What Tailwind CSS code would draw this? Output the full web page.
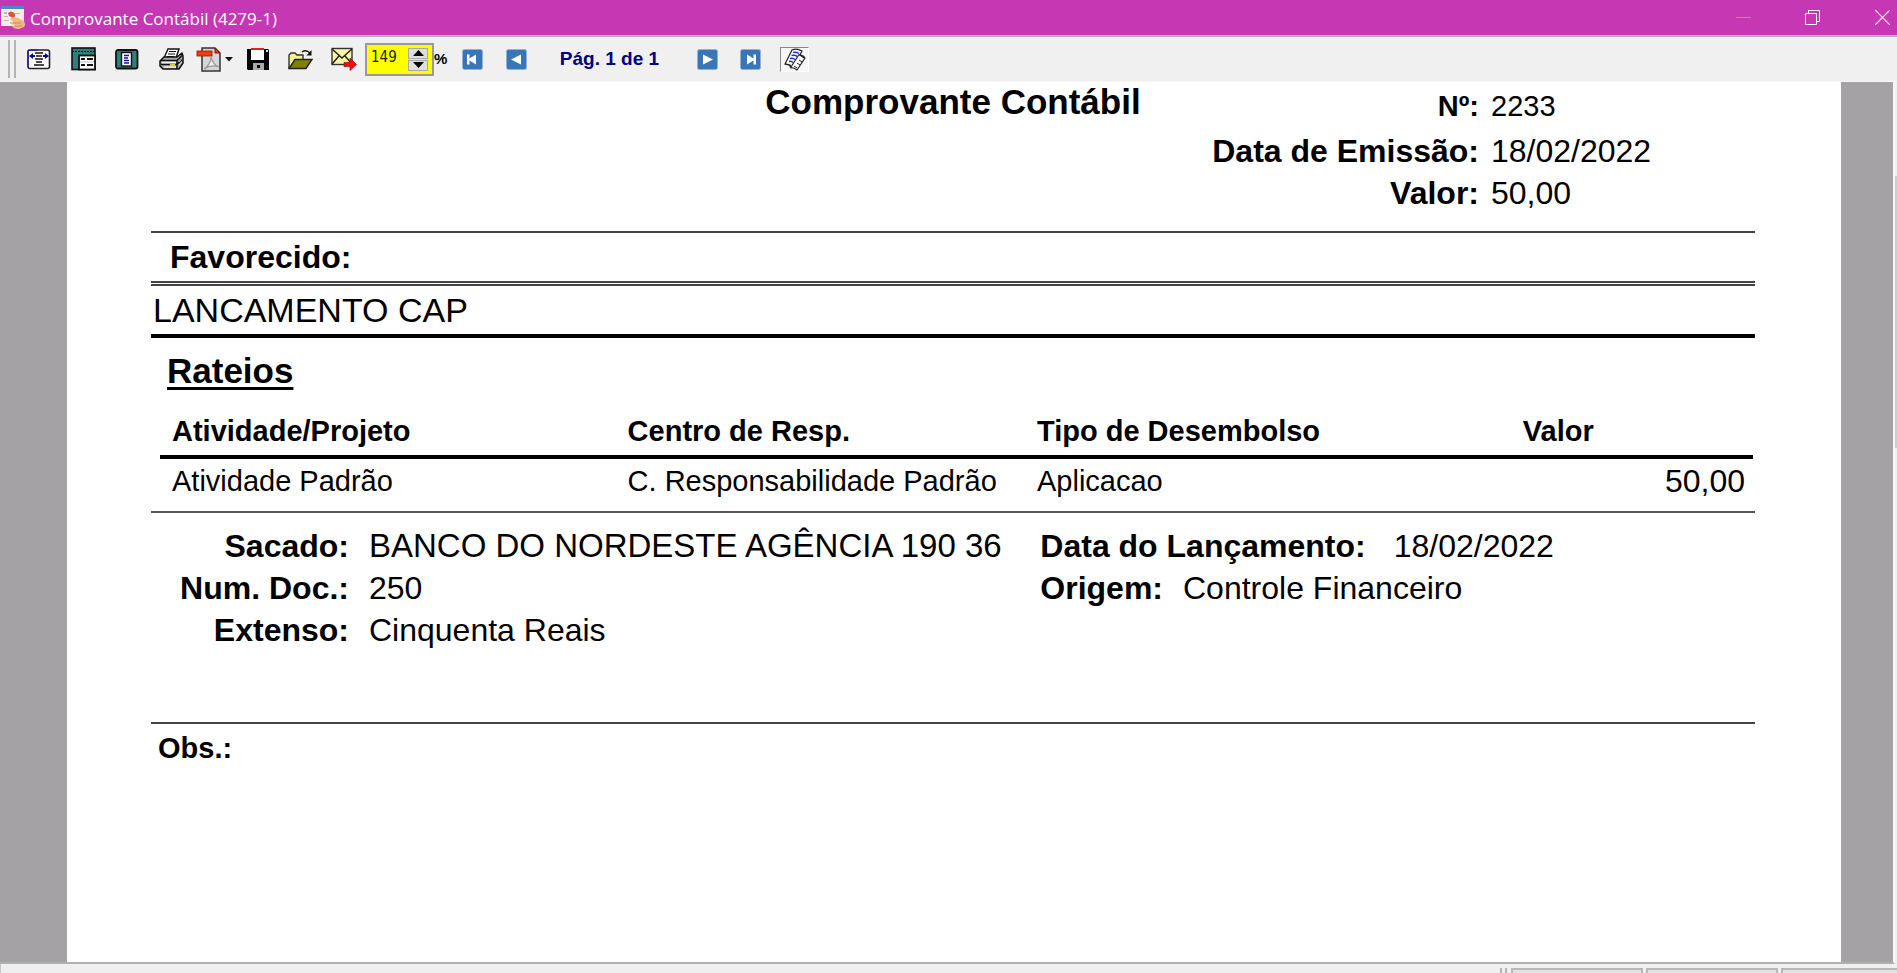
<!DOCTYPE html>
<html lang="pt-BR">
<head>
<meta charset="utf-8">
<title>Comprovante Contábil (4279-1)</title>
<script src="https://cdn.jsdelivr.net/npm/@tailwindcss/browser@4"></script>
</head>
<body class="flex h-screen flex-col overflow-hidden bg-[#f0f0f0] font-['Liberation_Sans',Arial,sans-serif] text-black">

<!-- Title bar -->
<header class="flex h-[35px] shrink-0 items-center bg-[#c537b3] text-white">
  <svg class="shrink-0" width="26" height="24" viewBox="0 0 26 24" aria-hidden="true">
    <rect x="1" y="0" width="23" height="20" fill="#f7ece6"/>
    <rect x="1" y="0" width="23" height="3" fill="#4f86c8"/>
    <path d="M4 6h3v2H4zM4 10h4v1H4zM4 14h5v1H4z" fill="#b9b3c4"/>
    <path d="M8 7q3-3 6 0t-1 5l-4-2z" fill="#d9573f"/>
    <path d="M14 7h6v1h-6z" fill="#e8a090"/>
    <path d="M10 13q4-3 8-1l6 3q2 4 0 6l-5 2q-6 0-7-3l4-1-6-1v-2h4z" fill="#efb981"/>
    <path d="M13 17h8M14 20h8" stroke="#d08a55" stroke-width="1" fill="none"/>
  </svg>
  <h1 class="ml-1 flex-1 pt-[2px] font-['Open_Sans','Noto_Sans',sans-serif] text-[17px] leading-[33px] font-normal">Comprovante Contábil (4279-1)</h1>
  <button class="grid h-full w-[68px] place-items-center" aria-label="Minimizar">
    <svg width="15" height="15" viewBox="0 0 15 15"><path d="M0 7.500h15" stroke="#d56fc8"/></svg>
  </button>
  <button class="grid h-full w-[70px] place-items-center" aria-label="Restaurar">
    <svg width="15" height="15" viewBox="0 0 15 15" fill="none" stroke="#fff"><path d="M.5 3.500h11v11H.5zM3.500 3.500v-3h11v11h-3"/></svg>
  </button>
  <button class="ml-[21px] grid h-full w-[29px] place-items-center" aria-label="Fechar">
    <svg width="15" height="15" viewBox="0 0 15 15" stroke="#fff" stroke-width="1.200"><path d="M0 0l15 15M15 0L0 15"/></svg>
  </button>
</header>

<!-- Toolbar -->
<div class="flex h-[47px] shrink-0 items-center border-t-2 border-b border-t-[#b4b4b4] border-b-[#f8f8f8] bg-[#f0f0f0]" role="toolbar" aria-label="Visualização">
  <div class="flex w-[17px] shrink-0 gap-1 pl-2">
    <span class="h-[38px] w-[2px] shrink-0 bg-[#b4b4b4]"></span><span class="h-[38px] w-[2px] shrink-0 bg-[#b4b4b4]"></span>
  </div>
  <button class="grid h-10 w-11 shrink-0 place-items-center" aria-label="Ajustar à largura">
    <svg width="24" height="21" viewBox="0 0 24 21">
      <rect x="1" y="1" width="21.500" height="18.500" rx="2" fill="#fff" stroke="#222" stroke-width="1.600"/>
      <path d="M1 18V3q0-2 2-2h8" fill="none" stroke="#2a2aa0" stroke-width="1.600"/>
      <path d="M8 4h8M9 7h6M8 10h8M9 13h6M7 16h10" stroke="#111" stroke-width="1.500"/>
      <path d="M2 7l4-3v2h2v2H6v2zM22 7l-4-3v2h-2v2h2v2z" fill="#0a0a8c"/>
    </svg>
  </button>
  <button class="grid h-10 w-11 shrink-0 place-items-center" aria-label="Página inteira">
    <svg width="25" height="24" viewBox="0 0 25 24">
      <rect x="1" y="1" width="23" height="21.500" fill="#2f7f7c" stroke="#111" stroke-width="1.600"/>
      <path d="M1 4.500h23" stroke="#111" stroke-width="1.200" stroke-dasharray="2 1"/>
      <rect x="8" y="8.500" width="16" height="14" fill="#fff" stroke="#111" stroke-width="1.800"/>
      <path d="M10 12h4M16 12h6M10 18h4M16 18h6" stroke="#111" stroke-width="2"/>
      <path d="M9 15h14" stroke="#999" stroke-width=".6"/>
    </svg>
  </button>
  <button class="grid h-10 w-11 shrink-0 place-items-center" aria-label="Tamanho real">
    <svg width="24" height="21" viewBox="0 0 24 21">
      <rect x="1" y="1" width="21.500" height="18.500" rx="2" fill="#2f7f7c" stroke="#111" stroke-width="1.800"/>
      <rect x="6.500" y="3.500" width="10" height="13.500" fill="#fff" stroke="#111" stroke-width="1.400"/>
      <path d="M9 6.500h5M9 9h4M9 11.500h5M9 14h5" stroke="#14148c" stroke-width="1.300"/>
    </svg>
  </button>
  <button class="grid h-10 w-11 shrink-0 place-items-center" aria-label="Imprimir">
    <svg width="25" height="23" viewBox="0 0 25 23">
      <path d="M5 10L9 1h11l-3 9z" fill="#fff" stroke="#111" stroke-width="1.400"/>
      <path d="M10 3.500h7M9 6h7M8 8.500h7" stroke="#111" stroke-width="1.200"/>
      <path d="M1 13l4-4h13l5-4 1 3v7l-4 6H4l-3-3z" fill="#aaa" stroke="#111" stroke-width="1.500" stroke-linejoin="round"/>
      <path d="M2 12.500h16l5-5M2 16.500h16l5-5M18 13v8" stroke="#111" stroke-width="1.500" fill="none"/>
      <path d="M3 14.500h14M5 19h12" stroke="#f4f4f4" stroke-width="1.300"/>
      <path d="M11 16.800h5" stroke="#e6dc00" stroke-width="2"/>
      <path d="M20 14l3-3M20 17l3-3" stroke="#fff" stroke-dasharray="1 1"/>
    </svg>
  </button>
  <button class="grid h-10 w-[43px] shrink-0 place-items-center" aria-label="Exportar para PDF">
    <svg width="38" height="25" viewBox="0 0 38 25">
      <path d="M6 1h13l5 5v18H6z" fill="#d6d6d6" stroke="#333" stroke-width="1.500"/>
      <path d="M8 22q7-5 7-12 2 8 8 10-8-3-15 2z" fill="#eee" stroke="#999" stroke-width="1.100"/>
      <path d="M19 1v5h5z" fill="#f23a10" stroke="#6a1a08"/>
      <rect x="1" y="4" width="15" height="5" fill="#f33b0c" stroke="#8a1c00" stroke-width=".8"/>
      <path d="M29 10h8l-4 4.500z" fill="#111"/>
    </svg>
  </button>
  <button class="grid h-10 w-[43px] shrink-0 place-items-center" aria-label="Salvar">
    <svg width="24" height="23" viewBox="0 0 24 23">
      <path d="M1 1h21l1 1v20H2l-1-1z" fill="#050505"/>
      <rect x="5" y="1" width="13" height="11" fill="#fff"/><rect x="5" y="0" width="13" height="2" fill="#e22020"/>
      <rect x="20" y="2" width="2" height="2" fill="#ddd"/>
      <rect x="7" y="15" width="11" height="7" fill="#aaa"/><rect x="11" y="17" width="3" height="3" fill="#050505"/>
    </svg>
  </button>
  <button class="grid h-10 w-[43px] shrink-0 place-items-center" aria-label="Abrir">
    <svg width="25" height="21" viewBox="0 0 25 21">
      <path d="M1 19V6l2-2h4l2 2h6v4" fill="#f6f08a" stroke="#333" stroke-width="1.400"/>
      <path d="M1 19.500l6-9h17l-6 9z" fill="#7f7f0c" stroke="#222" stroke-width="1.400"/>
      <path d="M14 3q4-3 8 1" fill="none" stroke="#111" stroke-width="1.400"/><path d="M23.500 1v5.500h-5z" fill="#111"/>
    </svg>
  </button>
  <button class="grid h-10 w-[43px] shrink-0 place-items-center" aria-label="Enviar por e-mail">
    <svg width="26" height="24" viewBox="0 0 26 24">
      <rect x="1" y="1.500" width="20" height="16" fill="#fbf7a8" stroke="#333" stroke-width="1.400"/>
      <path d="M1 2l10 9L21 2M1 17l7-8M21 17l-7-8" fill="none" stroke="#222" stroke-width="1.500"/>
      <path d="M13 15.500h6V11l6.500 6.500L19 23.500v-4h-6z" fill="#ee1111" stroke="#a80000" stroke-width=".7"/>
    </svg>
  </button>
  <div class="flex h-[33px] w-[69px] shrink-0 items-center border-2 border-[#9a9a9a] bg-[#ffff00] pr-1 pl-1">
    <input id="zoom" type="text" value="149" class="w-0 min-w-0 flex-1 bg-transparent pb-1 font-['DejaVu_Sans_Condensed','DejaVu_Sans',sans-serif] text-[15px] leading-5 text-[#222200] outline-none">
    <div class="flex w-5 flex-col gap-px">
      <button class="grid h-[11px] place-items-center border border-[#aaa] bg-[#dedede]" aria-label="Aumentar"><svg width="11" height="6" viewBox="0 0 11 6"><path d="M0 6l5.500-6L11 6z"/></svg></button>
      <button class="grid h-[11px] place-items-center border border-[#aaa] bg-[#dedede]" aria-label="Diminuir"><svg width="11" height="6" viewBox="0 0 11 6"><path d="M0 0l5.500 6L11 0z"/></svg></button>
    </div>
  </div>
  <label for="zoom" class="w-4 shrink-0 text-[15px] leading-5 font-bold">%</label>
  <button class="grid h-10 w-11 shrink-0 place-items-center" aria-label="Primeira página">
    <svg width="21" height="21" viewBox="0 0 21 21"><rect x=".5" y=".5" width="20" height="20" rx="2" fill="#3a76b6" stroke="#8fb2d6"/><path d="M5 5.500h2.500v4L14 5.500v10l-6.500-4v4H5z" fill="#fff"/></svg>
  </button>
  <button class="grid h-10 w-11 shrink-0 place-items-center" aria-label="Página anterior">
    <svg width="21" height="21" viewBox="0 0 21 21"><rect x=".5" y=".5" width="20" height="20" rx="2" fill="#3a76b6" stroke="#8fb2d6"/><path d="M15 5.500v10l-10-5z" fill="#fff"/></svg>
  </button>
  <output class="w-[147px] shrink-0 pr-1 text-center text-[19px] leading-6 font-bold text-[#000080]">Pág. 1 de 1</output>
  <button class="grid h-10 w-11 shrink-0 place-items-center" aria-label="Próxima página">
    <svg width="21" height="21" viewBox="0 0 21 21"><rect x=".5" y=".5" width="20" height="20" rx="2" fill="#3a76b6" stroke="#8fb2d6"/><path d="M6 5.500v10l10-5z" fill="#fff"/></svg>
  </button>
  <button class="grid h-10 w-[43px] shrink-0 place-items-center" aria-label="Última página">
    <svg width="21" height="21" viewBox="0 0 21 21"><rect x=".5" y=".5" width="20" height="20" rx="2" fill="#3a76b6" stroke="#8fb2d6"/><path d="M16 5.500h-2.500v4L7 5.500v10l6.500-4v4H16z" fill="#fff"/></svg>
  </button>
  <button class="ml-2 grid h-[25px] w-[29px] shrink-0 place-items-center border border-t-[#888] border-r-white border-b-white border-l-[#888] bg-[#f7f7f7]" aria-label="Editar relatório">
    <svg width="22" height="23" viewBox="0 0 22 23">
      <path d="M8 2q5-2 10 1l-2 4q3 0 5 3l-8 12q-4-3-6-2l-1-3-5-1z" fill="#fff" stroke="#222" stroke-width="1.200"/>
      <path d="M1 16q4 0 6 3L14 8q1-2 2-1l4 3" fill="none" stroke="#222" stroke-width="1.200"/>
      <path d="M9 4.500q3-1 6 1M7.500 7.500q3-1 6 1M6 10.500q3-1 5 1M5 13.500q2-1 4 1" stroke="#2030e0" stroke-width="1.500" fill="none"/>
      <path d="M10 18l3 2M15 12l3 2M13 15l3 2" stroke="#222" fill="none"/>
    </svg>
  </button>
</div>

<!-- Preview area -->
<div class="flex min-h-0 flex-1">
  <main class="flex min-w-0 flex-1 overflow-hidden border-r-2 border-b-2 border-r-[#f8f8f8] border-b-[#b0b0b0] bg-[#a4a2a4] pr-[52px] pl-[67px]">
    <article class="min-w-0 flex-1 bg-white pr-[86px] pl-[84px]">

      <section class="grid grid-cols-[1fr_auto_1fr] border-b-2 border-[#444] pb-[17px]">
        <h2 class="col-start-2 text-[35px] leading-10 font-bold">Comprovante Contábil</h2>
        <dl class="grid grid-cols-[1fr_264px] gap-x-3 text-[32px] leading-[42px]">
          <dt class="text-right text-[29px] leading-[48px] font-bold">Nº:</dt><dd class="text-[29px] leading-[48px]">2233</dd>
          <dt class="text-right font-bold">Data de Emissão:</dt><dd>18/02/2022</dd>
          <dt class="text-right font-bold">Valor:</dt><dd>50,00</dd>
        </dl>
      </section>

      <h3 class="border-b-[5px] border-double border-[#444] pl-[19px] text-[32px] leading-[48px] font-bold">Favorecido:</h3>
      <p class="border-b-4 border-black pl-[2px] text-[34px] leading-[48px]">LANCAMENTO CAP</p>

      <section class="border-b-2 border-[#555] pb-2">
        <h3 class="mt-[13px] pl-4 text-[35px] leading-10 font-bold underline decoration-[3px] underline-offset-[4px]">Rateios</h3>
        <div class="mt-[19px] pr-[2px] pl-[9px]">
          <table class="w-full table-fixed border-collapse text-left text-[29px]">
            <thead>
              <tr class="border-b-4 border-black leading-[42px]">
                <th class="w-[28.600%] pb-[3px] pl-3">Atividade/Projeto</th>
                <th class="w-[25.700%] pb-[3px] pl-3">Centro de Resp.</th>
                <th class="w-[30.500%] pb-[3px] pl-3">Tipo de Desembolso</th>
                <th class="pb-[3px] pl-3">Valor</th>
              </tr>
            </thead>
            <tbody>
              <tr class="leading-[44px] whitespace-nowrap">
                <td class="pl-3">Atividade Padrão</td>
                <td class="pl-3">C. Responsabilidade Padrão</td>
                <td class="pl-3">Aplicacao</td>
                <td class="pr-2 text-right text-[32px]">50,00</td>
              </tr>
            </tbody>
          </table>
        </div>
      </section>

      <section class="flex gap-9 border-b-2 border-[#444] pt-3 pb-[71px] text-[32px] leading-[42px]">
        <dl class="grid w-[53.200%] grid-cols-[198px_1fr] gap-x-5">
          <dt class="text-right font-bold">Sacado:</dt><dd class="min-w-0 overflow-hidden text-[33px] whitespace-nowrap">BANCO DO NORDESTE AGÊNCIA 190 36</dd>
          <dt class="text-right font-bold">Num. Doc.:</dt><dd>250</dd>
          <dt class="text-right font-bold">Extenso:</dt><dd>Cinquenta Reais</dd>
        </dl>
        <dl class="min-w-0 flex-1">
          <div class="flex gap-7"><dt class="font-bold">Data do Lançamento:</dt><dd>18/02/2022</dd></div>
          <div class="flex gap-5"><dt class="font-bold">Origem:</dt><dd>Controle Financeiro</dd></div>
        </dl>
      </section>

      <h3 class="pl-[7px] text-[29px] leading-[48px] font-bold">Obs.:</h3>
    </article>
  </main>
  <div class="w-[2px] shrink-0 pt-[94px]"><div class="h-[272px] bg-[#cdcdcd]"></div></div>
</div>

<!-- Status bar -->
<footer class="flex h-[9px] shrink-0 justify-end gap-[3px] overflow-hidden border-l border-[#c8c8c8] bg-[#f0f0f0] pt-1">
  <span class="w-[2px] bg-[#b4b4b4]"></span>
  <span class="mr-[1px] w-[2px] bg-[#b4b4b4]"></span>
  <span class="w-[132px] border-x-2 border-t-2 border-[#b8b8b8] bg-[#e2e2e2]"></span>
  <span class="w-[132px] border-x-2 border-t-2 border-[#b8b8b8] bg-[#e2e2e2]"></span>
  <span class="w-[116px] border-t-2 border-l-2 border-[#b8b8b8] bg-[#e2e2e2]"></span>
</footer>
</body>
</html>
